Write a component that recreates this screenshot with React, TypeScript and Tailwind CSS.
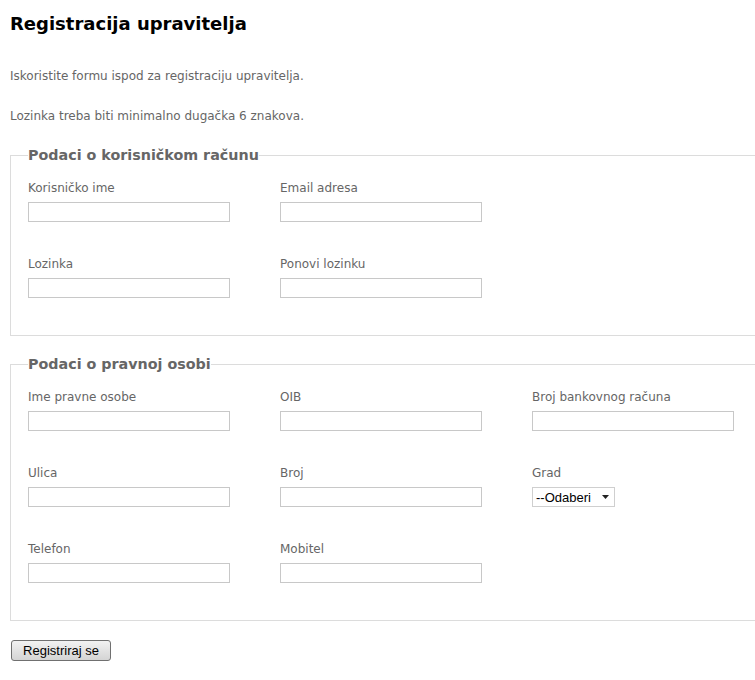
type Field = { label: string; kind?: "input" | "select" };

const accountRows: Field[][] = [
  [{ label: "Korisničko ime" }, { label: "Email adresa" }],
  [{ label: "Lozinka" }, { label: "Ponovi lozinku" }],
];

const companyRows: Field[][] = [
  [{ label: "Ime pravne osobe" }, { label: "OIB" }, { label: "Broj bankovnog računa" }],
  [{ label: "Ulica" }, { label: "Broj" }, { label: "Grad", kind: "select" }],
  [{ label: "Telefon" }, { label: "Mobitel" }],
];

const FormField = ({ label, kind = "input" }: Field) => (
  <div className="w-[252px] shrink-0">
    <label className="block text-[12px] leading-[15px] text-[#666] mb-[6px]">{label}</label>
    {kind === "select" ? (
      <div className="flex items-center w-[83px] h-[20px] border border-[#cfcfcf] bg-white pl-[3px] pr-[5px] font-['Liberation_Sans',Arial,sans-serif] text-[13px] text-black">
        <span className="flex-1 leading-none">--Odaberi</span>
        <svg width="7" height="4" viewBox="0 0 7 4" className="text-[#222]">
          <path d="M0 0h7L3.5 4z" fill="currentColor" />
        </svg>
      </div>
    ) : (
      <input type="text" className="block w-[202px] h-[20px] border border-[#c8c8c8] bg-white outline-none" />
    )}
  </div>
);

const Section = ({ title, rows }: { title: string; rows: Field[][] }) => (
  <fieldset className="w-[770px] border border-[#dcdcdc] pl-[17px] pt-[17px] pb-[37px]">
    <legend className="text-[14.3px] leading-[17px] font-bold text-[#666]">{title}</legend>
    <div className="flex flex-col gap-[35px]">
      {rows.map((row, i) => (
        <div key={i} className="flex">
          {row.map((f) => (
            <FormField key={f.label} {...f} />
          ))}
        </div>
      ))}
    </div>
  </fieldset>
);

export default function App() {
  return (
    <div className="w-[755px] h-[680px] overflow-hidden bg-white px-[10px] font-['DejaVu_Sans',Verdana,sans-serif]">
      <h1 className="pt-[13px] text-[18px] leading-[22px] font-bold text-black">Registracija upravitelja</h1>
      <p className="mt-[34px] text-[12px] leading-[15px] text-[#666]">Iskoristite formu ispod za registraciju upravitelja.</p>
      <p className="mt-[25px] text-[12px] leading-[15px] text-[#666]">Lozinka treba biti minimalno dugačka 6 znakova.</p>

      <div className="mt-[23px] flex flex-col gap-[20px]">
        <Section title="Podaci o korisničkom računu" rows={accountRows} />
        <Section title="Podaci o pravnoj osobi" rows={companyRows} />
      </div>

      <button
        type="button"
        className="mt-[19px] ml-px w-[100px] h-[21px] rounded-[3px] border border-[#707070] bg-gradient-to-b from-[#f2f2f2] to-[#d4d4d4] font-['Liberation_Sans',Arial,sans-serif] text-[13px] leading-none text-black"
      >
        Registriraj se
      </button>
    </div>
  );
}
